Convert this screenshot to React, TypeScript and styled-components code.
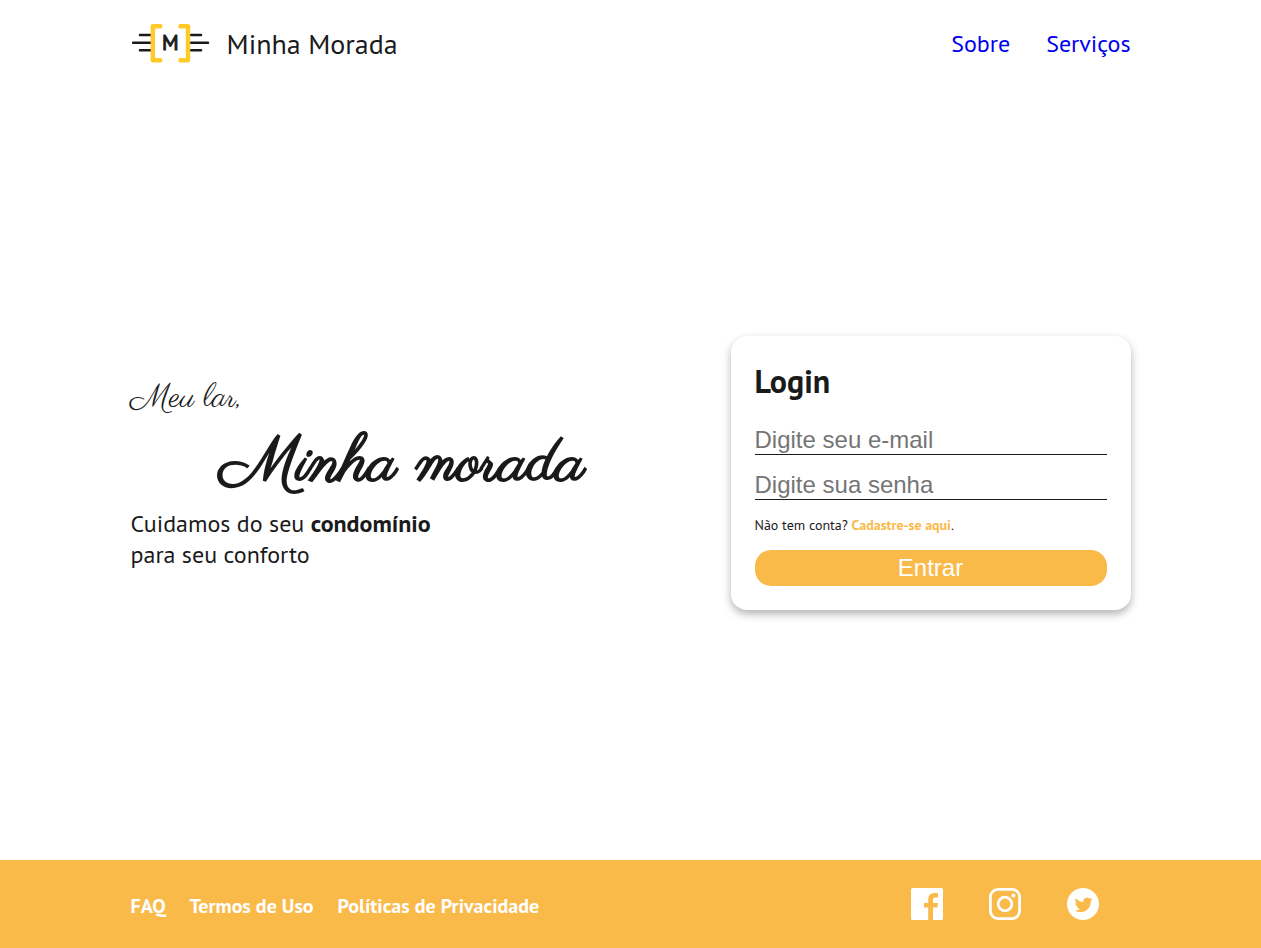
import React from "react";
import styled, { createGlobalStyle } from "styled-components";

const colors = {
  ink: "#1a1a1a",
  brand: "#faba49",
  white: "#ffffff",
  link: "#0000ee",
};

const sans = `"PT Sans", "Noto Sans", sans-serif`;
const script = `"Parisienne", "Liberation Serif", cursive`;
const control = `"Liberation Sans", Arial, sans-serif`;

const GlobalStyle = createGlobalStyle`
  *, *::before, *::after { box-sizing: border-box; margin: 0; padding: 0; }
  body { background: ${colors.white}; color: ${colors.ink}; font-family: ${sans}; }
  a { text-decoration: none; }
`;

const Page = styled.div`
  display: flex;
  flex-direction: column;
  min-height: 100vh;
`;

const Container = styled.div`
  display: flex;
  align-items: center;
  justify-content: space-between;
  width: 100%;
  max-width: 1000px;
  margin: 0 auto;
`;

const Header = styled.header`
  display: flex;
  min-height: 88px;
`;

const Brand = styled.div`
  display: flex;
  align-items: center;
  gap: 16px;
`;

const BrandName = styled.span`
  font-size: 28px;
  line-height: 36px;
`;

const Nav = styled.nav`
  display: flex;
  gap: 36px;
`;

const NavLink = styled.a`
  color: ${colors.link};
  font-size: 24px;
  line-height: 32px;
`;

const Main = styled.main`
  display: flex;
  flex: 1;
  padding-bottom: 2px;
`;

const Hero = styled.section`
  display: flex;
  flex-direction: column;
`;

const Kicker = styled.p`
  font-family: ${script};
  font-size: 32px;
  line-height: 46px;
`;

const Title = styled.h1`
  padding-left: 90px;
  font-family: ${script};
  font-size: 64px;
  font-weight: 400;
  line-height: 86px;
  -webkit-text-stroke: 2px ${colors.ink};
`;

const Lead = styled.p`
  font-size: 24px;
  line-height: 31px;
`;

const Card = styled.form`
  display: flex;
  flex-direction: column;
  gap: 16px;
  width: 400px;
  padding: 24px;
  border-radius: 16px;
  background: ${colors.white};
  box-shadow: 0 4px 8px rgba(0, 0, 0, 0.3);
`;

const CardTitle = styled.h2`
  padding-bottom: 8px;
  font-size: 32px;
  line-height: 42px;
`;

const Field = styled.input`
  width: 100%;
  height: 29px;
  border: 0;
  border-bottom: 1px solid ${colors.ink};
  outline: 0;
  background: transparent;
  color: ${colors.ink};
  font-family: ${control};
  font-size: 24px;

  &::placeholder { color: #757575; }
`;

const SignUp = styled.p`
  font-size: 14px;
  line-height: 18px;

  a { color: ${colors.brand}; font-weight: 700; }
`;

const Submit = styled.button`
  height: 36px;
  border: 0;
  border-radius: 16px;
  background: ${colors.brand};
  color: ${colors.white};
  font-family: ${control};
  font-size: 24px;
  cursor: pointer;
`;

const Footer = styled.footer`
  display: flex;
  min-height: 88px;
  background: ${colors.brand};
`;

const FooterLinks = styled.nav`
  display: flex;
  gap: 24px;
  padding-top: 4px;
`;

const FooterLink = styled.a`
  color: ${colors.white};
  font-size: 20px;
  font-weight: 700;
  line-height: 24px;
`;

const Social = styled.div`
  display: flex;
  gap: 46px;
  padding-right: 32px;

  a, svg { display: block; }
`;

const Logo = () => (
  <svg width="80" height="42" viewBox="0 1 80 42" fill="none" strokeLinecap="round" aria-hidden="true">
    <g stroke={colors.ink} strokeWidth="2.6">
      <path d="M9 13H20M2.2 20.7H20M9 28.3H20M60 13H70M60 20.7H77M60 28.3H70" />
    </g>
    <path
      d="M29.3 4.3H21.8V38.3H29.3M49.4 4.3H57V38.3H49.4"
      stroke="#ffc928"
      strokeWidth="4.4"
      strokeLinejoin="round"
    />
    <text
      x="39.3"
      y="28.2"
      textAnchor="middle"
      fontFamily={sans}
      fontSize="21"
      fill={colors.ink}
      stroke={colors.ink}
      strokeWidth="1"
      strokeLinejoin="round"
    >
      M
    </text>
  </svg>
);

const FacebookIcon = () => (
  <svg width="32" height="32" viewBox="0 0 32 32" aria-hidden="true">
    <path
      fill={colors.white}
      d="M1.5 0H30.5A1.5 1.5 0 0 1 32 1.5V30.5A1.5 1.5 0 0 1 30.5 32H22V19.5H26.4L27 15H22V11.8C22 10.2 22.6 9.4 24.4 9.4H27V5.2C26 5.05 24.8 5 23.6 5C19.8 5 17.2 7.3 17.2 11.4V15H13V19.5H17.2V32H1.5A1.5 1.5 0 0 1 0 30.5V1.5A1.5 1.5 0 0 1 1.5 0Z"
    />
  </svg>
);

const InstagramIcon = () => (
  <svg width="32" height="32" viewBox="0 0 32 32" fill="none" stroke={colors.white} strokeWidth="2.8" aria-hidden="true">
    <rect x="1.4" y="1.4" width="29.2" height="29.2" rx="7.6" />
    <circle cx="16" cy="16" r="6.8" />
    <circle cx="24.4" cy="7.5" r="2" fill={colors.white} stroke="none" />
  </svg>
);

const TwitterIcon = () => (
  <svg width="32" height="32" viewBox="0 0 32 32" aria-hidden="true">
    <circle cx="16" cy="16" r="16" fill={colors.white} />
    <path
      fill={colors.brand}
      transform="translate(7.6 7.8) scale(0.75)"
      d="M23.953 4.57a10 10 0 01-2.825.775 4.958 4.958 0 002.163-2.723c-.951.555-2.005.959-3.127 1.184a4.92 4.92 0 00-8.384 4.482C7.69 8.095 4.067 6.13 1.64 3.162a4.822 4.822 0 00-.666 2.475c0 1.71.87 3.213 2.188 4.096a4.904 4.904 0 01-2.228-.616v.06a4.923 4.923 0 003.946 4.827 4.996 4.996 0 01-2.212.085 4.936 4.936 0 004.604 3.417 9.867 9.867 0 01-6.102 2.105c-.39 0-.779-.023-1.17-.067a13.995 13.995 0 007.557 2.209c9.053 0 13.998-7.496 13.998-13.985 0-.21 0-.42-.015-.63A9.935 9.935 0 0024 4.59z"
    />
  </svg>
);

export default function App() {
  return (
    <Page>
      <GlobalStyle />
      <Header>
        <Container>
          <Brand>
            <Logo />
            <BrandName>Minha Morada</BrandName>
          </Brand>
          <Nav>
            <NavLink href="#sobre">Sobre</NavLink>
            <NavLink href="#servicos">Serviços</NavLink>
          </Nav>
        </Container>
      </Header>
      <Main>
        <Container>
          <Hero>
            <Kicker>Meu lar,</Kicker>
            <Title>Minha morada</Title>
            <Lead>
              Cuidamos do seu <strong>condomínio</strong>
              <br />
              para seu conforto
            </Lead>
          </Hero>
          <Card onSubmit={(event: React.FormEvent) => event.preventDefault()}>
            <CardTitle>Login</CardTitle>
            <Field type="email" placeholder="Digite seu e-mail" aria-label="E-mail" />
            <Field type="password" placeholder="Digite sua senha" aria-label="Senha" />
            <SignUp>
              Não tem conta? <a href="#cadastro">Cadastre-se aqui</a>.
            </SignUp>
            <Submit type="submit">Entrar</Submit>
          </Card>
        </Container>
      </Main>
      <Footer>
        <Container>
          <FooterLinks>
            <FooterLink href="#faq">FAQ</FooterLink>
            <FooterLink href="#termos">Termos de Uso</FooterLink>
            <FooterLink href="#privacidade">Políticas de Privacidade</FooterLink>
          </FooterLinks>
          <Social>
            <a href="#facebook" aria-label="Facebook"><FacebookIcon /></a>
            <a href="#instagram" aria-label="Instagram"><InstagramIcon /></a>
            <a href="#twitter" aria-label="Twitter"><TwitterIcon /></a>
          </Social>
        </Container>
      </Footer>
    </Page>
  );
}
